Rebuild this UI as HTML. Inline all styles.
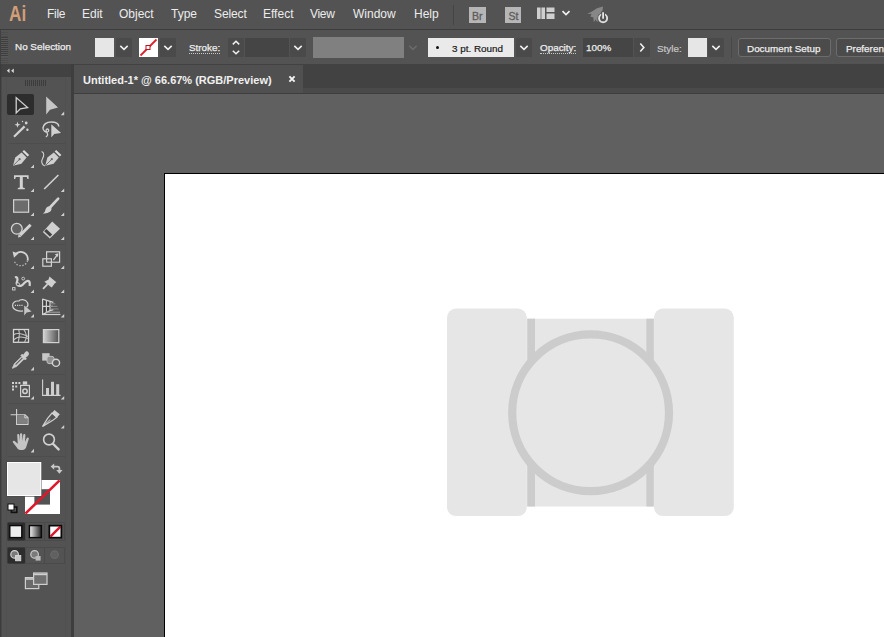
<!DOCTYPE html>
<html><head><meta charset="utf-8"><title>Untitled-1* @ 66.67% (RGB/Preview)</title>
<style>
html,body{margin:0;padding:0;}
body{width:884px;height:637px;overflow:hidden;position:relative;background:#535353;font-family:"Liberation Sans",sans-serif;color:#e8e8e8;font-size:12px;}
.a{position:absolute;}
.t{position:absolute;white-space:nowrap;line-height:14px;}
#menubar{left:0;top:0;width:884px;height:29px;background:#535353;}
#menuline{left:0;top:29px;width:884px;height:1px;background:#3c3c3c;}
#ctrl{left:0;top:30px;width:884px;height:34px;background:#535353;}
#tabbar{left:73px;top:64px;width:811px;height:30px;background:linear-gradient(180deg,#424242 0,#424242 24.5px,#4a4a4a 24.5px,#4a4a4a 29.2px,#3e3e3e 29.2px,#3e3e3e 30px);}
#tab{left:74px;top:65px;width:228.5px;height:28.2px;background:#505050;}
#canvas{left:74px;top:94px;width:810px;height:543px;background:#606060;}
#tools{left:0;top:64px;width:71px;height:573px;background:#535353;}
#toolshdr{left:1px;top:64px;width:70px;height:13px;background:#424242;}
#toolsborder{left:71px;top:64px;width:3px;height:573px;background:#3e3e3e;}
#artboard{left:164px;top:173px;width:720px;height:464px;background:#fff;border-left:1px solid #000;border-top:1px solid #000;box-sizing:border-box;}
.m{top:7px;font-size:12px;color:#ececec;}
.sw{background:#e6e6e6;}
.c{font-size:9.9px;color:#ededed;-webkit-text-stroke:0.25px #ededed;}
.dd{background:#4a4a4a;border-radius:1px;}
</style></head><body>
<div id="menubar" class="a"></div>
<div id="menuline" class="a"></div>
<div id="ctrl" class="a"></div>
<div id="tabbar" class="a"></div>
<div id="tab" class="a"></div>
<div id="canvas" class="a"></div>
<div id="artboard" class="a"></div>
<div id="tools" class="a"></div>
<div id="toolshdr" class="a"></div>
<div id="toolsborder" class="a"></div>

<!-- artwork -->
<svg class="a" style="left:430px;top:290px" width="320" height="240" viewBox="430 290 320 240">
<rect x="447" y="308.6" width="79.8" height="207.5" rx="9" fill="#e6e6e6"/>
<rect x="654" y="308.6" width="79.8" height="207.5" rx="9" fill="#e6e6e6"/>
<rect x="526.6" y="318.7" width="127.6" height="187.8" fill="#e6e6e6"/>
<rect x="527.3" y="318.7" width="7.7" height="187.8" fill="#cccccc"/>
<rect x="646.4" y="318.7" width="7.4" height="187.8" fill="#cccccc"/>
<circle cx="590.6" cy="412.8" r="78.4" fill="#e6e6e6" stroke="#cccccc" stroke-width="8.2"/>
</svg>

<!-- menu -->
<div class="t" style="left:8.6px;top:2.7px;font-size:21.5px;line-height:22px;font-weight:bold;color:#d29e78;transform:scaleX(0.8);transform-origin:0 0">Ai</div>
<div class="t m" style="left:47px;letter-spacing:-0.3px">File</div>
<div class="t m" style="left:82px">Edit</div>
<div class="t m" style="left:119px">Object</div>
<div class="t m" style="left:171px">Type</div>
<div class="t m" style="left:214px;letter-spacing:-0.12px">Select</div>
<div class="t m" style="left:263px">Effect</div>
<div class="t m" style="left:310px;letter-spacing:-0.3px">View</div>
<div class="t m" style="left:353px">Window</div>
<div class="t m" style="left:414px">Help</div>


<!-- control bar -->
<div class="a" style="left:0;top:30px;width:1px;height:34px;background:#404040"></div><div class="a" style="left:1px;top:32px;width:7px;height:31px;background:repeating-linear-gradient(180deg,#4c4c4c 0,#4c4c4c 1px,#555 1px,#555 2px)"></div><div class="a" style="left:1px;top:37px;width:7px;height:20px;background:repeating-linear-gradient(180deg,#3e3e3e 0,#3e3e3e 1px,#585858 1px,#585858 2px)"></div>
<div class="t c" style="left:15px;top:40px">No Selection</div>
<div class="a sw" style="left:95px;top:38px;width:19px;height:19px"></div>
<div class="a dd" style="left:116px;top:38px;width:16px;height:19px"></div>
<div class="a" style="left:139px;top:38px;width:19px;height:19px;background:#fff"></div>
<svg class="a" style="left:139px;top:38px" width="19" height="19" viewBox="0 0 19 19"><path d="M1.5 17.5L17.5 1.5" stroke="#e0202a" stroke-width="1.8"/><rect x="7" y="7.5" width="4" height="4" fill="#fff" stroke="#c01020" stroke-width="1"/></svg>
<div class="a dd" style="left:160px;top:38px;width:16px;height:19px"></div>
<div class="t c" style="left:189px;top:42.4px;border-bottom:1px dotted #c8c8c8;line-height:11px">Stroke:</div>
<div class="a dd" style="left:228px;top:38px;width:16px;height:19px"></div>
<div class="a" style="left:245px;top:38px;width:44px;height:19px;background:#454545"></div>
<div class="a dd" style="left:290px;top:38px;width:16px;height:19px"></div>
<div class="a" style="left:313px;top:37px;width:91px;height:21px;background:#808080"></div>
<div class="a" style="left:428px;top:38px;width:86px;height:19px;background:#eaeaea"></div>
<div class="a" style="left:436px;top:46px;width:2.6px;height:2.6px;border-radius:2px;background:#111"></div>
<div class="t c" style="left:452px;top:41.7px;color:#1a1a1a;-webkit-text-stroke:0.2px #1a1a1a">3 pt. Round</div>
<div class="a dd" style="left:516px;top:38px;width:16px;height:19px"></div>
<div class="t c" style="left:540px;top:42.4px;border-bottom:1px dotted #c8c8c8;line-height:11px">Opacity:</div>
<div class="a" style="left:583px;top:38px;width:50px;height:19px;background:#454545"></div>
<div class="t c" style="left:586px;top:40.7px">100%</div>
<div class="a dd" style="left:634px;top:38px;width:16px;height:19px"></div>
<div class="t c" style="left:657px;top:41.6px;color:#c8c8c8;-webkit-text-stroke:0.2px #c8c8c8">Style:</div><div class="a" style="left:731px;top:37px;width:1px;height:21px;background:#484848"></div>
<div class="a sw" style="left:688px;top:38px;width:19px;height:19px"></div>
<div class="a dd" style="left:708px;top:38px;width:16px;height:19px"></div>
<div class="a" style="left:738px;top:38px;width:93px;height:19px;border:1px solid #6c6c6c;border-radius:3px;box-sizing:border-box;background:#4b4b4b"></div>
<div class="t c" style="left:747px;top:41.6px">Document Setup</div>
<div class="a" style="left:836px;top:38px;width:60px;height:19px;border:1px solid #6c6c6c;border-radius:3px;box-sizing:border-box;background:#4b4b4b"></div>
<div class="t c" style="left:846px;top:41.6px">Preferences</div>

<!-- tab -->
<svg class="a" style="left:287px;top:74px" width="10" height="10" viewBox="0 0 10 10"><path d="M2.4 2.4L7.6 7.6M7.6 2.4L2.4 7.6" stroke="#f4f4f4" stroke-width="1.9"/></svg>
<div class="t" style="left:83px;top:73px;font-weight:bold;font-size:11px;color:#f0f0f0">Untitled-1* @ 66.67% (RGB/Preview)</div>

<!-- menubar right -->
<div class="a" style="left:453px;top:5px;width:1px;height:20px;background:#454545"></div>
<div class="a" style="left:469px;top:7px;width:16.5px;height:16px;background:#b6b6b6"></div>
<div class="t" style="left:472px;top:9.5px;font-size:10.5px;line-height:12px;color:#5c5c5c;-webkit-text-stroke:0.3px #5c5c5c">Br</div>
<div class="a" style="left:505px;top:7px;width:16px;height:16px;background:#b6b6b6"></div>
<div class="t" style="left:508.5px;top:9.5px;font-size:10.5px;line-height:12px;color:#5c5c5c;-webkit-text-stroke:0.3px #5c5c5c">St</div>
<svg class="a" style="left:537px;top:7px" width="18" height="13" viewBox="0 0 18 13"><rect x="0" y="0.5" width="3.6" height="11.5" fill="#cfcfcf"/><rect x="4.4" y="0.5" width="3.6" height="11.5" fill="#cfcfcf"/><rect x="9.5" y="0.5" width="8" height="4.5" fill="#cfcfcf"/><rect x="9.5" y="6.5" width="8" height="5.5" fill="#cfcfcf"/></svg>
<svg class="a" style="left:561px;top:9px" width="10" height="8" viewBox="0 0 10 8"><path d="M1.5 2.2L5 5.6L8.5 2.2" fill="none" stroke="#f0f0f0" stroke-width="1.7"/></svg>
<svg class="a" style="left:585px;top:3px" width="26" height="22" viewBox="0 0 26 22"><path d="M2 11L7 8.4L12 5.2L18 3.6L17.4 8L13 13.4L12.4 19.4L10.6 16.4L8.8 19.2L8.4 14.4L5.4 13.6L6.6 10.8Z" fill="#878787"/><circle cx="18.1" cy="15.2" r="5.6" fill="#535353"/><circle cx="18.1" cy="15.2" r="4.05" fill="#535353" stroke="#dedede" stroke-width="1.9"/><rect x="16.2" y="8.4" width="3.8" height="7" fill="#535353"/><path d="M18.1 9.2V15.8" stroke="#e6e6e6" stroke-width="1.8"/></svg>
<svg class="a" style="left:116px;top:38px" width="16" height="19" viewBox="0 0 16 19"><path d="M4.3 7.8L8 11.3L11.7 7.8" fill="none" stroke="#f0f0f0" stroke-width="1.6"/></svg>
<svg class="a" style="left:160px;top:38px" width="16" height="19" viewBox="0 0 16 19"><path d="M4.3 7.8L8 11.3L11.7 7.8" fill="none" stroke="#f0f0f0" stroke-width="1.6"/></svg>
<svg class="a" style="left:290px;top:38px" width="16" height="19" viewBox="0 0 16 19"><path d="M4.3 7.8L8 11.3L11.7 7.8" fill="none" stroke="#f0f0f0" stroke-width="1.6"/></svg>
<svg class="a" style="left:516px;top:38px" width="16" height="19" viewBox="0 0 16 19"><path d="M4.3 7.8L8 11.3L11.7 7.8" fill="none" stroke="#f0f0f0" stroke-width="1.6"/></svg>
<svg class="a" style="left:708px;top:38px" width="16" height="19" viewBox="0 0 16 19"><path d="M4.3 7.8L8 11.3L11.7 7.8" fill="none" stroke="#f0f0f0" stroke-width="1.6"/></svg>
<svg class="a" style="left:405px;top:38px" width="16" height="19" viewBox="0 0 16 19"><path d="M4.3 7.8L8 11.3L11.7 7.8" fill="none" stroke="#6a6a6a" stroke-width="1.6"/></svg>
<svg class="a" style="left:634px;top:38px" width="16" height="19" viewBox="0 0 16 19"><path d="M6.3 5.5L9.8 9.5L6.3 13.5" fill="none" stroke="#f0f0f0" stroke-width="1.6"/></svg>
<svg class="a" style="left:228px;top:38px" width="16" height="19" viewBox="0 0 16 19"><path d="M4.8 6.4L8 3.3L11.2 6.4M4.8 12.7L8 15.8L11.2 12.7" fill="none" stroke="#f0f0f0" stroke-width="1.5"/></svg>

<!-- tools -->
<svg class="a" style="left:0;top:64px" width="72" height="573" viewBox="0 64 72 573" fill="none" stroke-linejoin="miter">
<path d="M9.5 68.5L6.8 70.8L9.5 73.1ZM13.8 68.5L11.1 70.8L13.8 73.1Z" fill="#d8d8d8"/>
<path d="M25.5 80V86M27.5 80V86M29.5 80V86M31.5 80V86M33.5 80V86M35.5 80V86M37.5 80V86M39.5 80V86M41.5 80V86M43.5 80V86M45.5 80V86" stroke="#3c3c3c" stroke-width="1"/>
<rect x="7" y="94" width="27" height="21" rx="2" fill="#2d2d2d"/>
<rect x="8" y="143" width="57" height="1" fill="#4d4d4d"/><rect x="8" y="244" width="57" height="1" fill="#4d4d4d"/><rect x="8" y="321" width="57" height="1" fill="#4d4d4d"/><rect x="8" y="374" width="57" height="1" fill="#4d4d4d"/><rect x="8" y="403" width="57" height="1" fill="#4d4d4d"/><rect x="8" y="456" width="57" height="1" fill="#4d4d4d"/>
<rect x="0" y="64" width="1.4" height="573" fill="#3c3c3c"/>
<rect x="6" y="77" width="1" height="560" fill="#505050"/><rect x="65" y="77" width="1" height="560" fill="#505050"/>
<!-- selection -->
<path d="M16.2 97.6V113L20.3 108.9L27.6 107.6Z" stroke="#d2d2d2" stroke-width="1.3"/>
<!-- direct selection -->
<path d="M46.2 96.5V114.6L50 109.7L58 107.6Z" fill="#c6c6c6"/>
<path d="M64.2 111.60000000000001V115.2H60.800000000000004Z" fill="#cfcfcf"/>
<!-- magic wand -->
<path d="M14 136.8L24.6 126.4" stroke="#d2d2d2" stroke-width="2.2"/>
<path d="M17.5 121.6L18.3 123.9L20.6 124.7L18.3 125.5L17.5 127.8L16.7 125.5L14.4 124.7L16.7 123.9Z" fill="#d2d2d2"/>
<circle cx="26.2" cy="123" r="1.4" fill="#d2d2d2"/><circle cx="27.4" cy="129.7" r="1.2" fill="#d2d2d2"/><circle cx="22.5" cy="121.5" r="0.7" fill="#d2d2d2"/>
<!-- lasso -->
<path d="M42.9 128.2C43.4 124.2 47 121.9 51.5 121.9C55.6 121.9 58.8 123.7 58.8 126.6" stroke="#d2d2d2" stroke-width="1.5"/>
<path d="M42.9 128C43.2 130.6 45.4 132.8 47.6 132C49.4 131.3 48.8 128.8 47.2 129C45.6 129.3 46 131.6 47 132.8C48.2 134.2 47.6 136.2 45.8 136.8" stroke="#d2d2d2" stroke-width="1.3"/>
<path d="M51.3 124.2V137.4L54.3 134L61.2 133.1Z" fill="#d0d0d0" stroke="#4a4a4a" stroke-width="1.4" paint-order="stroke"/>
<!-- pen -->
<g id="pen"><path d="M13 165.8L15.2 157.6L21.6 152.6L26.6 157.6L21.4 163.8Z" fill="#cfcfcf"/><path d="M22.5 151.6L24 150L29.2 155L27.6 156.6Z" fill="#dcdcdc"/><path d="M13.4 165.4L19.2 159.6" stroke="#666" stroke-width="0.9"/><circle cx="19.6" cy="159.2" r="1.1" fill="#666"/></g>
<path d="M34 164.4V168H30.6Z" fill="#cfcfcf"/>
<!-- curvature -->
<g transform="translate(32.2 0)"><path d="M13 165.8L15.2 157.6L21.6 152.6L26.6 157.6L21.4 163.8Z" fill="#cfcfcf"/><path d="M22.5 151.6L24 150L29.2 155L27.6 156.6Z" fill="#dcdcdc"/><path d="M13.4 165.4L19.2 159.6" stroke="#666" stroke-width="0.9"/><circle cx="19.6" cy="159.2" r="1.1" fill="#666"/></g>
<path d="M41.6 151.4C44.6 152.6 44 156 42.6 158.4C41.2 161 41.2 164.6 44.8 166" stroke="#d2d2d2" stroke-width="1.1"/>
<!-- type -->
<path d="M14 175.2H28.6V179H27.4L26.8 177H22.8V187.4L24.8 187.9V189.2H17.8V187.9L19.8 187.4V177H15.8L15.2 179H14Z" fill="#d2d2d2"/>
<path d="M34 188.4V192H30.6Z" fill="#cfcfcf"/>
<!-- line -->
<path d="M44.2 189L58.4 175" stroke="#d2d2d2" stroke-width="1.6"/>
<path d="M64.2 188.4V192H60.800000000000004Z" fill="#cfcfcf"/>
<!-- rectangle -->
<rect x="13.6" y="199.8" width="15" height="12.4" fill="#6c6c6c" stroke="#d2d2d2" stroke-width="1.2"/>
<path d="M34 212.4V216H30.6Z" fill="#cfcfcf"/>
<!-- paintbrush -->
<path d="M58.2 198.6L50.4 207" stroke="#d2d2d2" stroke-width="2.6" stroke-linecap="round"/>
<path d="M48.4 206.4C50.4 206 52 207.8 51.4 209.8C50.6 212.4 46.4 213.8 42.8 213.6C45.2 212.4 45 210.6 45.8 208.8C46.4 207.4 47.2 206.6 48.4 206.4Z" fill="#d2d2d2"/>
<path d="M64.2 212.4V216H60.800000000000004Z" fill="#cfcfcf"/>
<!-- shaper -->
<circle cx="16.8" cy="228.8" r="5.4" fill="#626262" stroke="#d2d2d2" stroke-width="1.3"/>
<path d="M30.6 224.8L20.2 235.2" stroke="#d2d2d2" stroke-width="3"/>
<path d="M18 237.6L18.6 234L21.4 236.8Z" fill="#d2d2d2"/>
<path d="M34 236.4V240H30.6Z" fill="#cfcfcf"/>
<!-- eraser -->
<path d="M52.2 221.4L60 228.8L49.8 238.6L42.8 232Z" fill="#cfcfcf"/>
<path d="M46.4 229L52.2 234.6L50 236.8L44.2 231.2Z" fill="#444"/>
<path d="M64.2 236.4V240H60.800000000000004Z" fill="#cfcfcf"/>
<!-- rotate -->
<path d="M15.2 254.8A7 7 0 0 1 27.6 260.6" stroke="#d2d2d2" stroke-width="1.8"/>
<path d="M27.6 260.6A7 7 0 0 1 14.4 261.4" stroke="#b0b0b0" stroke-width="1.3" stroke-dasharray="1.6 1.4"/>
<path d="M12.6 251.6L18.4 253.4L14 257.8Z" fill="#d2d2d2"/>
<path d="M34 265.4V269H30.6Z" fill="#cfcfcf"/>
<!-- scale -->
<rect x="46.6" y="251.8" width="13" height="10.4" stroke="#d2d2d2" stroke-width="1.2"/>
<rect x="42.8" y="258.8" width="8.6" height="7.4" stroke="#d2d2d2" stroke-width="1.2"/>
<path d="M53.4 260.2L57.6 254.4" stroke="#d2d2d2" stroke-width="1.3"/><path d="M58.4 253.2L58 257L54.8 254.2Z" fill="#d2d2d2"/>
<path d="M64.2 265.4V269H60.800000000000004Z" fill="#cfcfcf"/>
<!-- width -->
<path d="M15 277.6C17.4 276 18 279.4 17 281.6C15.8 284.4 18.4 287 21.6 285.4C24.4 284 25.6 279.6 28.6 281C30.4 282 29.8 284.6 29.6 286" stroke="#d2d2d2" stroke-width="2.2"/>
<circle cx="18" cy="284.2" r="1.5" stroke="#d2d2d2" stroke-width="0.9" fill="#535353"/><circle cx="23.2" cy="278.6" r="1.4" stroke="#d2d2d2" stroke-width="0.9" fill="#535353"/>
<rect x="12.6" y="287.6" width="2.4" height="2.4" stroke="#d2d2d2" stroke-width="0.9"/>
<path d="M34 289.4V293H30.6Z" fill="#cfcfcf"/>
<!-- puppet pin -->
<path d="M49.4 276.6L56.4 282.2L54.6 283.6L51.8 287.6L50.6 286.8L44.4 281.8L48.6 279.4Z" fill="#cfcfcf"/>
<path d="M47.6 284.2L43 288.8" stroke="#d2d2d2" stroke-width="1.8"/>
<path d="M64.2 289.4V293H60.800000000000004Z" fill="#cfcfcf"/>
<!-- shape builder -->
<path d="M18.6 301.2C20 299 25.6 298.8 27.4 302.4C28.6 304.8 27.6 306.4 26.6 307.2M23 310.8C19.6 311.8 13 310.4 12.6 305.6C12.4 302.4 15.6 300.4 18.6 301.2" stroke="#d2d2d2" stroke-width="1.2"/>
<path d="M14.8 305.4H23" stroke="#d2d2d2" stroke-width="1.2" stroke-dasharray="1.2 1"/>
<path d="M24.2 305.6V315.4L26.6 312.6L31.6 311.6Z" fill="#c6c6c6"/>
<path d="M34 314.0V317.6H30.6Z" fill="#cfcfcf"/>
<!-- perspective grid -->
<path d="M42.6 299.2L50 301.4V310.6L42.6 314.6Z" fill="#3e3e3e"/>
<path d="M42.6 298.8V315M42.6 299.2L53.4 302.4M46.4 300.3V312.6M50 301.4V310.8M42.6 306.4H53M42.6 314.6L50 310.6L53.4 309.6" stroke="#d4d4d4" stroke-width="1.2"/>
<path d="M42.6 314.5H60.4" stroke="#d0d0d0" stroke-width="1.2"/>
<path d="M50 303.8H55.4M50 306.4H57.4M50 309H58.6" stroke="#8c8c8c" stroke-width="1"/>
<path d="M46 312.2H60" stroke="#a8a8a8" stroke-width="1"/>
<path d="M64.2 314V317.6H60.800000000000004Z" fill="#cfcfcf"/>
<!-- mesh -->
<rect x="13.5" y="329.5" width="15" height="12.8" fill="#444" stroke="#d6d6d6" stroke-width="1.3"/>
<path d="M18.8 329.8C19.6 333 19.2 338 18.2 342M24 329.8C26.6 333 26.8 338 24.6 342M13.8 334.8C17 332.4 22 333.6 28.2 336.6M13.8 339.8C17 336.4 21 336 28.2 338.6" stroke="#c4c4c4" stroke-width="1.1"/>
<!-- gradient -->
<defs><linearGradient id="g1" x1="0" x2="1" y1="0" y2="0"><stop offset="0" stop-color="#d4d4d4"/><stop offset="1" stop-color="#505050"/></linearGradient>
<linearGradient id="g2" x1="0" x2="1" y1="0" y2="0"><stop offset="0" stop-color="#f4f4f4"/><stop offset="1" stop-color="#222"/></linearGradient></defs>
<rect x="43.4" y="329.6" width="15.4" height="13" fill="url(#g1)" stroke="#d2d2d2" stroke-width="1.2"/>
<!-- eyedropper -->
<path d="M27.6 351.8C29.2 353 28.8 355.4 27 356.4L25.4 357.6L26.4 358.8L25.2 360L24.2 359L16.6 366.6L14.2 367.4L12.6 368.4L12.4 367.6L13.4 366L14.2 363.8L21.8 356.4L20.8 355.4L22 354.2L23.2 355.2L24.4 353.6C25.2 352 26.6 351.2 27.6 351.8Z" fill="#cdcdcd" stroke="#cdcdcd" stroke-width="0.7"/>
<path d="M15.6 364.6L22.4 357.8" stroke="#5a5a5a" stroke-width="1.1"/>
<path d="M34 366.79999999999995V370.4H30.6Z" fill="#cfcfcf"/>
<!-- blend -->
<rect x="42.2" y="353.2" width="7.4" height="7.4" fill="#c8c8c8"/>
<rect x="47" y="356.4" width="7" height="7.2" rx="2" fill="#909090" stroke="#c0c0c0" stroke-width="1"/>
<circle cx="56" cy="362.8" r="3.6" fill="#5a5a5a" stroke="#d2d2d2" stroke-width="1.4"/>
<!-- symbol sprayer -->
<path d="M12 382H14V384H12ZM15.2 382H17.2V384H15.2ZM18.4 382H20.4V384H18.4ZM12 385.4H14V387.4H12ZM15.2 385.4H17.2V387.4H15.2ZM12 388.6H14V390.6H12Z" fill="#d2d2d2"/>
<rect x="22.8" y="381.4" width="4.4" height="3.2" fill="#d2d2d2"/>
<rect x="20.6" y="385.4" width="8.8" height="11.2" stroke="#d2d2d2" stroke-width="1.2"/>
<circle cx="25" cy="391.2" r="2.2" stroke="#d2d2d2" stroke-width="1.5"/>
<path d="M34 396.0V399.6H30.6Z" fill="#cfcfcf"/>
<!-- graph -->
<path d="M42.6 379.6V395.4H60.6" stroke="#d2d2d2" stroke-width="1.1"/>
<rect x="46" y="388" width="3" height="7" fill="#cdcdcd"/><rect x="51" y="381.8" width="3" height="13.2" fill="#cdcdcd"/><rect x="56.2" y="384.2" width="3" height="10.8" fill="#cdcdcd"/>
<path d="M64.2 396.0V399.6H60.800000000000004Z" fill="#cfcfcf"/>
<!-- artboard -->
<path d="M16.6 409V424.4H28V417.6L25 414.8H10.6" stroke="#d2d2d2" stroke-width="1.1"/>
<path d="M17.2 415.4H24.6L27.4 418V423.8H17.2Z" fill="#808080"/>
<path d="M24.8 414.8V417.8H28" stroke="#d2d2d2" stroke-width="1"/>
<!-- slice -->
<path d="M54.4 410L59.8 414.2L57 417.4L51.8 413.2Z" fill="#cfcfcf"/>
<path d="M52 413L56.8 417.2L52.4 420.6L42.6 426.4L47.6 418.4Z" stroke="#d2d2d2" stroke-width="1.2"/>
<path d="M42.6 426.4L50.4 419.4" stroke="#d2d2d2" stroke-width="1"/>
<path d="M64.2 425.0V428.6H60.800000000000004Z" fill="#cfcfcf"/>
<!-- hand -->
<path d="M17.2 435.2C17.2 433.6 19.2 433.6 19.4 435.2L20 441V434.4C20 432.8 22.2 432.8 22.2 434.4L22.4 441L23.2 435C23.4 433.6 25.4 433.8 25.4 435.4L25 442L26.8 438C27.4 436.8 29.2 437.6 28.8 439L26.4 446.6C25.8 448.6 24.6 450 22.4 450H20.4C18.6 450 17.6 449 16.8 447.6L13 442.4C12.2 441.2 13.6 440.2 14.6 441L17.8 443.8Z" fill="#c4c4c4"/>
<path d="M34 448.79999999999995V452.4H30.6Z" fill="#cfcfcf"/>
<!-- zoom -->
<circle cx="49" cy="439.5" r="5.4" stroke="#d2d2d2" stroke-width="1.6"/>
<path d="M53.2 444L58.6 449.4" stroke="#d2d2d2" stroke-width="2.4" stroke-linecap="round"/>
<!-- fill/stroke -->
<rect x="25" y="480" width="35" height="34" fill="#ffffff"/>
<rect x="34.4" y="489.2" width="15.6" height="15.4" fill="#535353"/>
<path d="M25.4 513.6L59.6 480.4" stroke="#e0162c" stroke-width="2.6"/>
<rect x="6.6" y="461.6" width="35" height="35" fill="#484848"/><rect x="7" y="462" width="34.3" height="34" fill="#fff"/>
<rect x="8" y="463" width="32.3" height="32" fill="#e6e6e6"/>
<!-- swap -->
<path d="M54.2 463.4L50.6 466.6L54.2 469.8ZM56.2 470L59.4 473.8L62.6 470Z" fill="#c8c8c8"/>
<path d="M53.6 466.6H57.4Q59.4 466.6 59.4 468.6V470.6" stroke="#c8c8c8" stroke-width="1.8"/>
<!-- default -->
<rect x="11.4" y="507" width="5.4" height="5.4" stroke="#111" stroke-width="1.6"/>
<rect x="8" y="504" width="6" height="6" fill="#fff" stroke="#111" stroke-width="1"/>
<path d="M7.5 522.5H64.5V540.5H7.5ZM25.5 522.5V540.5M44.5 522.5V540.5M7.5 547.5H64.5V563.5H7.5ZM25.5 547.5V563.5M44.5 547.5V563.5" stroke="#4a4a4a" stroke-width="1"/>
<!-- color / gradient / none -->
<rect x="7.5" y="522.5" width="17.5" height="18" rx="1" fill="#2d2d2d"/>
<rect x="9.8" y="525.6" width="12" height="12" fill="#ededed" stroke="#0a0a0a" stroke-width="1.4"/>
<rect x="29.4" y="525.6" width="12" height="12" fill="url(#g2)" stroke="#0a0a0a" stroke-width="1.4"/>
<rect x="49.4" y="525.6" width="12" height="12" fill="#fff" stroke="#0a0a0a" stroke-width="1.4"/>
<path d="M50.4 536.6L60.4 526.6" stroke="#e0162c" stroke-width="2.4"/>
<rect x="49.4" y="525.6" width="12" height="12" stroke="#0a0a0a" stroke-width="1.4"/>
<!-- draw modes -->
<rect x="7.5" y="547.5" width="17.5" height="16" rx="1" fill="#2d2d2d"/>
<circle cx="14.6" cy="554.4" r="3.8" fill="#7a7a7a" stroke="#d0d0d0" stroke-width="1.2"/>
<rect x="15.6" y="555.6" width="5.2" height="5.2" fill="#c8c8c8" stroke="#e0e0e0" stroke-width="0.8"/>
<circle cx="34.6" cy="554.4" r="3.8" fill="#7a7a7a" stroke="#c8c8c8" stroke-width="1.2"/>
<rect x="35.6" y="556" width="5" height="4.6" fill="#b8b8b8"/>
<circle cx="54.6" cy="554.6" r="3.8" fill="#606060" stroke="#686868" stroke-width="1.2"/>
<!-- screen mode -->
<rect x="25.4" y="577.6" width="13.4" height="11" fill="#6a6a6a" stroke="#cfcfcf" stroke-width="1.2"/>
<path d="M25.4 579H38.8" stroke="#cfcfcf" stroke-width="1.6"/>
<rect x="33.6" y="573" width="13.4" height="11.4" fill="#707070" stroke="#cfcfcf" stroke-width="1.2"/>
<path d="M33.6 574.4H47" stroke="#cfcfcf" stroke-width="1.6"/>
</svg>

</body></html>
